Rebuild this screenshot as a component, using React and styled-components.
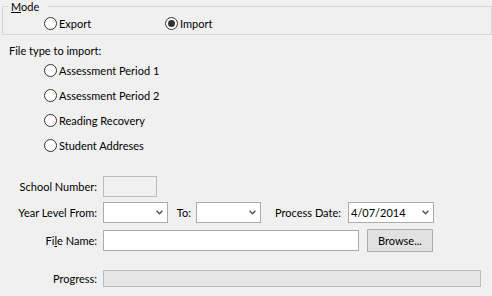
import React from 'react';
import styled, { createGlobalStyle } from 'styled-components';

const Global = createGlobalStyle`
  html, body { margin: 0; padding: 0; background: #f0f0f0; }
  body { font-family: Lato, "Liberation Sans", sans-serif; font-size: 11px; color: #000; }
`;

const Page = styled.div`
  width: 492px;
  height: 296px;
  overflow: hidden;
  background: #f0f0f0;
  display: flex;
  flex-direction: column;
`;

const GroupBox = styled.div`
  position: relative;
  margin: 6px 0 0 2px;
  width: 490px;
  height: 29px;
  box-sizing: border-box;
  border: 1px solid #d5d5d5;
  display: flex;
  align-items: flex-start;
  padding: 10px 0 0 41px;
`;

const Legend = styled.span`
  position: absolute;
  top: -8px;
  left: 5px;
  padding: 0 9px 0 3px;
  background: #f0f0f0;
  line-height: 16px;
`;

const RadioItem = styled.label`
  display: flex;
  align-items: center;
  gap: 2px;
  width: ${(p) => (p.$width ? `${p.$width}px` : 'auto')};
  height: ${(p) => p.$height || 13}px;
  white-space: nowrap;
  flex: none;
`;

const Circle = styled.span`
  width: 13px;
  height: 13px;
  box-sizing: border-box;
  border-radius: 50%;
  border: 1px solid #333;
  background: #fff;
  flex: none;
  display: flex;
  align-items: center;
  justify-content: center;
  &::after {
    content: '';
    width: 7px;
    height: 7px;
    border-radius: 50%;
    background: ${(p) => (p.$checked ? '#333' : 'transparent')};
  }
`;

const SectionLabel = styled.div`
  margin: 9px 0 0 9px;
  line-height: 14px;
`;

const RadioList = styled.div`
  display: flex;
  flex-direction: column;
  padding-left: 44px;
`;

const Form = styled.div`
  display: flex;
  flex-direction: column;
  margin-top: 18px;
`;

const FormRow = styled.div`
  display: flex;
  align-items: center;
  height: ${(p) => p.$h}px;
  margin-top: ${(p) => p.$mt || 0}px;
`;

const FieldLabel = styled.div`
  width: 97px;
  margin-right: 6px;
  text-align: right;
  white-space: nowrap;
  flex: none;
`;

const InlineLabel = styled.div`
  width: ${(p) => p.$w}px;
  box-sizing: border-box;
  padding-right: ${(p) => p.$pr}px;
  text-align: right;
  white-space: nowrap;
  flex: none;
`;

const TextBox = styled.div`
  width: ${(p) => p.$w}px;
  height: 21px;
  box-sizing: border-box;
  border: 1px solid ${(p) => (p.$disabled ? '#bcbcbc' : '#ababab')};
  background: ${(p) => (p.$disabled ? '#f0f0f0' : '#fff')};
  flex: none;
`;

const Combo = styled.div`
  width: ${(p) => p.$w}px;
  height: 21px;
  box-sizing: border-box;
  border: 1px solid #ababab;
  background: #fff;
  display: flex;
  align-items: center;
  justify-content: space-between;
  padding: 0 4px 0 2px;
  flex: none;
  white-space: nowrap;
`;

const Button = styled.button`
  width: 66px;
  height: 23px;
  margin-left: 8px;
  box-sizing: border-box;
  border: 1px solid #adadad;
  background: #e1e1e1;
  font: inherit;
  color: #000;
  padding: 0;
  flex: none;
`;

const Progress = styled.div`
  width: 378px;
  height: 17px;
  box-sizing: border-box;
  border: 1px solid #bcbcbc;
  background: #e6e6e6;
  flex: none;
`;

const Chevron = () => (
  <svg width="7" height="5" viewBox="0 0 7 5" style={{ display: 'block' }}>
    <path d="M0.6 0.8 L3.5 3.8 L6.4 0.8" fill="none" stroke="#505050" strokeWidth="1.4" />
  </svg>
);

const Radio = ({ label, checked, width, height }) => (
  <RadioItem $width={width} $height={height}>
    <Circle $checked={checked} />
    <span>{label}</span>
  </RadioItem>
);

const ComboBox = ({ w, value }) => (
  <Combo $w={w}>
    <span>{value || ''}</span>
    <Chevron />
  </Combo>
);

export default function App() {
  const fileTypes = ['Assessment Period 1', 'Assessment Period 2', 'Reading Recovery', 'Student Addreses'];
  return (
    <Page>
      <Global />
      <GroupBox>
        <Legend>
          <u>M</u>ode
        </Legend>
        <Radio label="Export" width={121} />
        <Radio label="Import" checked />
      </GroupBox>
      <SectionLabel>File type to import:</SectionLabel>
      <RadioList>
        {fileTypes.map((t) => (
          <Radio key={t} label={t} height={25} />
        ))}
      </RadioList>
      <Form>
        <FormRow $h={21}>
          <FieldLabel>School Number:</FieldLabel>
          <TextBox $w={54} $disabled />
        </FormRow>
        <FormRow $h={21} $mt={5}>
          <FieldLabel>Year Level From:</FieldLabel>
          <ComboBox w={65} />
          <InlineLabel $w={28} $pr={5}>To:</InlineLabel>
          <ComboBox w={65} />
          <InlineLabel $w={87} $pr={7}>Process Date:</InlineLabel>
          <ComboBox w={86} value="4/07/2014" />
        </FormRow>
        <FormRow $h={23} $mt={6}>
          <FieldLabel>
            Fi<u>l</u>e Name:
          </FieldLabel>
          <TextBox $w={256} />
          <Button>Browse...</Button>
        </FormRow>
        <FormRow $h={17} $mt={18}>
          <FieldLabel>Progress:</FieldLabel>
          <Progress />
        </FormRow>
      </Form>
    </Page>
  );
}
